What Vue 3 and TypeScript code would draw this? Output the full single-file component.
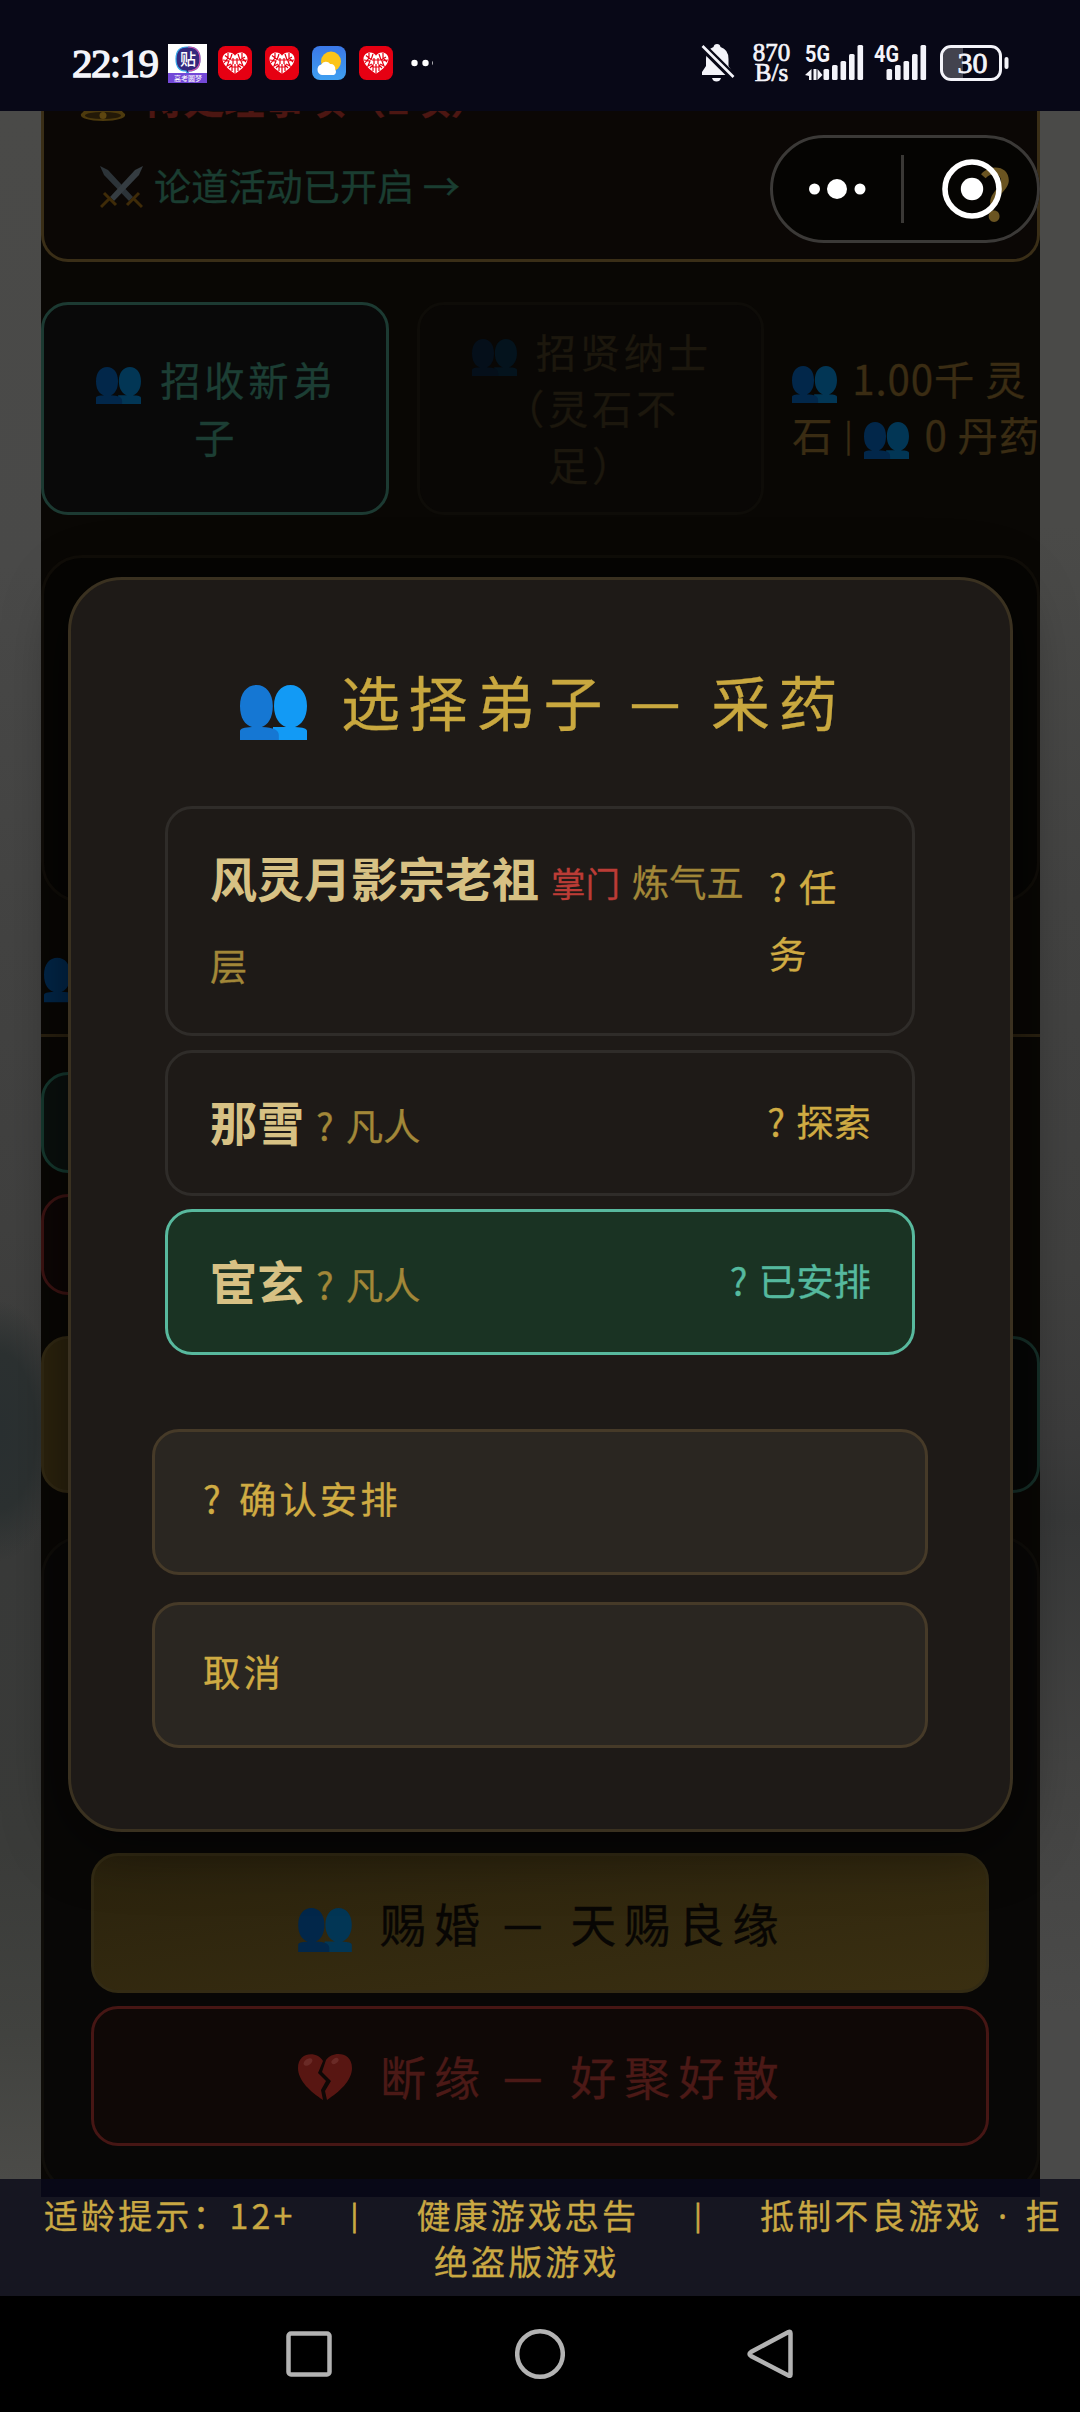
<script setup lang="ts">
interface Disciple {
  name: string
  master?: boolean
  level: string
  status: string
  picked?: boolean
}

const disciples: Disciple[] = [
  { name: '风灵月影宗老祖', master: true, level: '炼气五层', status: '任务' },
  { name: '那雪', level: '凡人', status: '探索' },
  { name: '宦玄', level: '凡人', status: '已安排', picked: true },
]

// Bar tops, measured from the top of the signal icon
const bars = [24, 20, 16, 9, 0]
</script>

<template>
  <div class="screen">
    <svg class="defs" width="0" height="0" aria-hidden="true">
      <symbol id="people" viewBox="0 0 67 55">
        <path class="back" d="M50.500 0C60 0 67 8 67 21c0 12-6 19-12 21 8 .5 12 1.500 12 4v9H33V42l13 0C40 40 34 33 34 21 34 8 41 0 50.500 0z" />
        <path class="front" d="M16.500 0C26 0 32.800 8 32.800 21c0 12-5 19-11 21 12 .5 17 3 17 8v5H0V46c0-2.500 4-3.500 12-4C5 40 0 33 0 21 0 8 7 0 16.500 0z" />
      </symbol>
      <symbol id="heart-mark" viewBox="0 0 34 34">
        <rect width="34" height="34" rx="7.500" fill="#e60012" />
        <path fill="#fff" d="M17 28C10 23 4.500 18.500 4.500 12.800 4.500 9 7.500 6.500 11 6.500c3 0 5 1.500 6 3.200 1-1.700 3-3.200 6-3.200 3.500 0 6.500 2.500 6.500 6.300C29.500 18.500 24 23 17 28z" />
        <path fill="none" stroke="#e60012" stroke-width="1.200" d="M7 9.500l5 4M10 7v5l-4 5M14 8l-2 6M20 8l2 6 5-3M24 7v5l4 4M13 14h8M15 12v6M19 12v6M5 14l6 1-2 5 4-2M29 14l-6 1 2 5-4-2M11 22l3-3v6M23 22l-3-3v6M17 18v10M14 21h6" />
      </symbol>
    </svg>

    <header class="status">
      <span class="clock">22:19</span>
      <svg class="app tieba" width="39" height="39" viewBox="0 0 39 39">
        <rect width="39" height="39" fill="#fff" />
        <path d="M19 3h2q11 0 11 12t-11 12l-1.500 3-1.500-3Q8 27 8 15T19 3z" fill="#35297e" stroke="#36a7e8" stroke-width="1.200" />
        <path d="M20 3q12 0 12 12T20 27" fill="none" stroke="#d548a4" stroke-width="1.200" />
        <text x="12" y="21" font-size="16" fill="#fff" font-weight="500" class="cjk">贴</text>
        <rect y="29" width="39" height="10" fill="#7348d8" />
        <text x="6" y="37" font-size="7" fill="#fff" class="cjk">高考圆梦</text>
      </svg>
      <svg class="app" width="34" height="34"><use href="#heart-mark" /></svg>
      <svg class="app" width="34" height="34"><use href="#heart-mark" /></svg>
      <svg class="app" width="34" height="34" viewBox="0 0 34 34">
        <defs>
          <linearGradient id="sky" x1="0" y1="0" x2="0" y2="1">
            <stop offset="0" stop-color="#3b78e8" /><stop offset="1" stop-color="#3f9ff0" />
          </linearGradient>
        </defs>
        <rect width="34" height="34" rx="8" fill="url(#sky)" />
        <circle cx="19" cy="15.500" r="10" fill="#fcc419" />
        <path d="M10 29a5.500 5.500 0 0 1-.8-10.600 5.500 5.500 0 0 1 9-.4 4.500 4.500 0 0 1 5 5.500 3.500 3.500 0 0 1-1.500 5.500z" fill="#fff" />
      </svg>
      <svg class="app" width="34" height="34"><use href="#heart-mark" /></svg>
      <svg class="more" width="22" height="8" viewBox="0 0 22 8">
        <circle cx="3.500" cy="4" r="3.200" fill="#fff" /><circle cx="14.500" cy="4" r="3.200" fill="#fff" /><circle cx="24.500" cy="4" r="3.200" fill="#fff" />
      </svg>
      <span class="spacer"></span>
      <svg class="mute" width="34" height="40" viewBox="0 0 34 40">
        <path fill="#f4f4fa" d="M16 1q3 0 3.500 3 8 2.500 8 12v7l4 6v3H1v-3l4-6v-7Q5 6.500 12.500 4 13 1 16 1zM11 35h9q-1 3.500-4.500 3.500T11 35z" />
        <path d="M1 3l31 31" stroke="#080817" stroke-width="8" />
        <path d="M1.500 3l31 31" stroke="#f4f4fa" stroke-width="2.600" />
      </svg>
      <span class="speed"><b>870</b><b>B/s</b></span>
      <svg class="signal" width="60" height="36" viewBox="0 0 60 36">
        <text x="0" y="17" textLength="25" lengthAdjust="spacingAndGlyphs" font-size="24" class="net">5G</text>
        <path fill="#f4f4fa" d="M6.500 24v11H4v-4L0 30zM8.500 24h3v11h-3zM12.500 24l5 6-5 5z" />
        <rect v-for="(t, i) in bars" :key="i" :x="18.500 + i * 8.500" :y="t" width="5.600" :height="35 - t" rx="1.500" fill="#f4f4fa" />
      </svg>
      <svg class="signal second" width="54" height="36" viewBox="0 0 54 36">
        <text x="0" y="17" textLength="25" lengthAdjust="spacingAndGlyphs" font-size="24" class="net">4G</text>
        <rect v-for="(t, i) in bars" :key="i" :x="12.500 + i * 8.500" :y="t" width="5.600" :height="35 - t" rx="1.500" fill="#f4f4fa" />
      </svg>
      <svg class="battery" width="69" height="36" viewBox="0 0 69 36">
        <path d="M12 3h11v30H12Q3 33 3 24V12Q3 3 12 3z" fill="#43434e" />
        <rect x="1.500" y="1.500" width="59" height="33" rx="9.500" fill="none" stroke="#f4f4fa" stroke-width="3" />
        <rect x="64.500" y="12" width="4" height="12" rx="2" fill="#f4f4fa" />
        <text x="17.500" y="28" font-size="30" textLength="30" class="pct">30</text>
      </svg>
    </header>

    <main class="stage">
      <div class="page">
        <section class="todo">
          <h2>
            <svg width="46" height="46" viewBox="0 0 46 46">
              <path fill="#4d3a0d" d="M23 2q3 0 3 4 11 3 12 18 .5 8 7 13 2 6-22 7Q-1 43 1 37q6-5 7-13Q9 9 20 6q0-4 3-4z" />
              <ellipse cx="23" cy="38.500" rx="18" ry="3.500" fill="#231907" /><circle cx="23" cy="38.500" r="3.500" fill="#5d4610" />
            </svg>
            <span>待处理事项（1项）</span>
          </h2>
          <p>
            <svg width="43" height="43" viewBox="0 0 43 43">
              <path fill="#2c3338" d="M0 0l8 4 25 27-4 4L4 9z" /><path fill="#353c41" d="M43 0l-8 4-25 27 4 4L39 9z" />
              <path fill="none" stroke="#3f2b08" stroke-width="3" d="M4 27l12 12M39 27L27 39M9 33l-8 8M34 33l8 8" />
            </svg>
            <span>论道活动已开启 →</span>
          </p>
        </section>

        <section class="recruit">
          <div class="btn open"><span><svg class="ppl"><use href="#people" /></svg> 招收新弟<br>子</span></div>
          <div class="btn closed"><span><svg class="ppl"><use href="#people" /></svg> 招贤纳士<br>（灵石不<br>足）</span></div>
          <div class="cost"><svg class="ppl"><use href="#people" /></svg> 1.00千 灵<br>石<i>|</i><svg class="ppl"><use href="#people" /></svg> 0 丹药</div>
        </section>

        <section class="panel"></section>
        <div class="section-head"><svg width="54" height="46" preserveAspectRatio="none"><use href="#people" /></svg></div>
        <div class="bar green"></div>
        <div class="bar red"></div>
        <div class="pair"><div class="gold"></div><div class="teal"></div></div>

        <section class="bonds">
          <div class="bond marry">
            <svg width="54" height="44"><use href="#people" /></svg><span>赐婚</span><i>—</i><span>天赐良缘</span>
          </div>
          <div class="bond part">
            <svg width="54" height="48" viewBox="0 0 54 48">
              <path fill="#581612" d="M25 8C20-2 0-2 0 15 0 28 13 39 25 47l-2-10 5-9-8-8z" />
              <path fill="#581612" d="M28 7C34-2 54-2 54 15 54 28 41 39 29 47l-2-9 6-10-9-9z" />
              <ellipse cx="10" cy="9" rx="5" ry="3" fill="#6a2a26" transform="rotate(-35 10 9)" /><ellipse cx="37" cy="8" rx="4" ry="2.500" fill="#6a2a26" transform="rotate(-35 37 8)" />
            </svg><span>断缘</span><i>—</i><span>好聚好散</span>
          </div>
        </section>
      </div>

      <div class="modal">
        <h1><svg width="67" height="55"><use href="#people" /></svg><span>选择弟子</span><i>—</i><span>采药</span></h1>
        <ul>
          <li v-for="d in disciples" :key="d.name" :class="{ picked: d.picked }">
            <div class="who">
              <strong>{{ d.name }}</strong><em v-if="d.master">掌门</em><small><template v-if="!d.master"><q>?</q></template>{{ d.level }}</small>
            </div>
            <div class="state" :class="{ narrow: d.master }"><q>?</q>{{ d.status }}</div>
          </li>
        </ul>
        <div class="actions">
          <button type="button"><q>?</q>确认安排</button>
          <button type="button">取消</button>
        </div>
      </div>

      <div class="help">?</div>
      <div class="capsule">
        <svg width="264" height="102" viewBox="0 0 264 102">
          <g fill="#fff"><circle cx="41.500" cy="51" r="5.500" /><circle cx="64" cy="51" r="10" /><circle cx="87" cy="51" r="5.500" /><circle cx="199" cy="51" r="11.200" /></g>
          <rect x="128" y="17" width="3" height="68" fill="#3a3835" />
          <circle cx="199" cy="51" r="27" fill="none" stroke="#fff" stroke-width="5.600" />
        </svg>
      </div>
    </main>

    <footer>
      <div>适龄提示：12+<i><s>|</s></i>健康游戏忠告<i><s>|</s></i>抵制不良游戏<u>·</u>拒</div>
      <div>绝盗版游戏</div>
    </footer>

    <nav>
      <svg width="50" height="52" viewBox="0 0 50 52"><rect x="4.500" y="5.500" width="41" height="41" rx="2.500" /></svg>
      <svg width="50" height="52" viewBox="0 0 50 52"><circle cx="25" cy="26" r="22.800" /></svg>
      <svg width="50" height="52" viewBox="0 0 50 52"><path d="M44.500 5.500v41q0 2-2 1L5 28q-3-2 0-4L42.500 4q2-1 2 1.500z" /></svg>
    </nav>
  </div>
</template>

<style>
body { margin: 0; background: #000; }
</style>

<style scoped>
* { box-sizing: border-box; margin: 0; padding: 0; }
.screen {
  --front: #02274a; --back: #023655;
  width: 1080px; height: 2412px; display: flex; flex-direction: column; overflow: hidden;
  font-family: "Noto Sans CJK SC", sans-serif;
}
.defs { position: absolute; }
.front { fill: var(--front); }
.back { fill: var(--back); }
i, em, u, s { font-style: normal; text-decoration: none; }
q { quotes: none; display: inline-block; }
q::before, q::after { content: none; }
.cjk { font-family: "Noto Sans CJK SC", sans-serif; }

.status { height: 111px; flex: none; background: #080817; display: flex; align-items: center; padding: 15px 71px 0 72px; }
.clock { font: 41px/1 "Liberation Serif", serif; letter-spacing: -1.600px; width: 96px; color: #f4f4fa; -webkit-text-stroke: 1.300px #f4f4fa; }
.app { margin-right: 13px; flex: none; }
.tieba { margin-right: 11px; }
.more { margin-left: 5px; }
.spacer { flex: 1; }
.mute { margin-right: 16px; }
.speed { width: 41px; display: flex; flex-direction: column; align-items: center; margin-right: 13px; }
.speed b { font: 400 25px/20px "Liberation Serif", serif; color: #f4f4fa; -webkit-text-stroke: .7px #f4f4fa; }
.net { font-family: Roboto, sans-serif; font-weight: 700; fill: #f4f4fa; }
.pct { font-family: "Liberation Serif", serif; fill: #f4f4fa; stroke: #f4f4fa; stroke-width: .8px; }
.signal { margin-right: 9px; overflow: visible; }
.second { margin-right: 12px; }

.stage {
  height: 2068px; flex: none; position: relative;
  background:
    radial-gradient(ellipse 60px 130px at 0 1320px, #2a3031 0, #2c3131 60%, transparent 100%) left / 41px 100% no-repeat,
    linear-gradient(#4a4a48 0, #494948 22%, #434342 40%, #40403f 54%, #393a39 70%, #3a3b39 84%, #41423f 93%, #4b4b48 100%) left / 41px 100% no-repeat,
    linear-gradient(#4a4a48 0, #4a4a48 20%, #434342 38%, #40403f 56%, #3c3c3c 64%, #373838 68%, #434342 80%, #4a4a49 92%, #4a4a49 100%) right / 40px 100% no-repeat;
}
.page { margin: 0 40px 0 41px; height: 2068px; overflow: hidden; background: #090704; display: flex; flex-direction: column; -webkit-text-stroke: .3px; }
.page > * { flex: none; }

.todo { height: 151px; border: 3px solid #3a2e17; border-top: 0; border-radius: 0 0 27px 27px; background: #0b0705; padding-left: 36px; overflow: hidden; }
.todo h2 { height: 12px; display: flex; align-items: flex-end; gap: 17px; font-size: 40.500px; line-height: 50px; color: #4c1612; }
.todo h2 span { position: relative; top: -1px; }
.todo p { margin-top: 35px; padding-left: 20px; display: flex; align-items: center; gap: 11px; height: 54px; font-size: 37.200px; color: #1a3d31; }
.todo p svg { position: relative; top: 2px; }

.recruit { margin-top: 40px; height: 213px; display: flex; gap: 28px; font-size: 40.300px; line-height: 56.400px; }
.btn { width: 348px; border: 3px solid #1c3a32; border-radius: 27px; display: flex; align-items: center; justify-content: center; text-align: center; letter-spacing: 3.700px; background: #090909; color: #1c3e34; padding: 0 0 2px 3px; }
.closed { border-color: #0e0c08; background: #090705; color: #1c170d; --front: #050f1a; --back: #04131d; }
.ppl { width: 45px; height: 37px; vertical-align: -8px; margin-right: 6px; }
.cost { flex: 1; color: #3a2c13; padding-top: 48px; white-space: nowrap; letter-spacing: .9px; }
.cost .ppl { margin-right: 5px; }
.cost i { display: inline-block; width: 31px; text-align: center; font-size: 31px; line-height: 1; position: relative; top: -4px; }

.panel { margin-top: 40px; height: 348px; border: 3px solid #100d08; border-radius: 41px; background: #060503; }
.section-head { height: 134px; margin-bottom: 35px; border-bottom: 3px solid #2a2110; padding: 54px 0 0 3px; }
.bar { width: 560px; height: 101px; border: 3px solid #163a30; border-radius: 27px; background: #0a100e; }
.bar.red { margin-top: 21px; border-color: #3e1413; background: #0d0605; }
.pair { margin-top: 41px; height: 157px; display: flex; gap: 20px; }
.pair div { flex: 1; border-radius: 27px; }
.gold { background: #2d240e; border: 3px solid #332a14; }
.teal { background: #060706; border: 3px solid #163029; }

.bonds { margin-top: 43px; height: 658px; border: 3px solid #0f0d09; border-radius: 41px; background: #080706; padding: 314px 48px 0 47px; display: flex; flex-direction: column; gap: 13px; }
.bond { height: 140px; flex: none; border-radius: 27px; border: 3px solid; display: flex; align-items: center; padding: 0 0 2px 204px; font-size: 46px; letter-spacing: 8.100px; white-space: nowrap; }
.bond svg { margin-right: 28px; position: relative; top: 2px; }
.bond i { font-family: "Noto Sans", sans-serif; font-size: 39px; width: 46px; margin: 0 21px 0 15px; letter-spacing: 0; }
.marry { border-color: #332b14; background: linear-gradient(172deg, #2a220d, #3a2f11); color: #080604; }
.marry svg { top: 8px; }
.part { border-color: #461614; background: #0f0806; color: #4b1916; }

.modal { --front: #1577d3; --back: #129af5; position: absolute; left: 68px; top: 466px; width: 945px; height: 1255px; border: 3px solid #3a3120; border-radius: 54px; background: #1e1a17; box-shadow: 0 12px 60px rgba(0, 0, 0, .55); padding: 80px 82px 0 81px; -webkit-text-stroke: .3px; }
h1 { font-weight: 400; display: flex; align-items: center; height: 92px; padding: 0 0 12px 88px; font-size: 59px; letter-spacing: 8.500px; color: #c9a83f; white-space: nowrap; }
h1 svg { margin-right: 34px; position: relative; top: 12px; }
h1 i { font-family: "Noto Sans", sans-serif; font-size: 50px; width: 57px; margin: 0 24px 0 19px; letter-spacing: 0; }
ul { list-style: none; margin: 54px 13px 0; display: flex; flex-direction: column; gap: 13.500px; }
li { border: 3px solid #2f2c29; border-radius: 27px; padding: 26px 42px 30px; display: flex; align-items: center; justify-content: space-between; min-height: 146px; }
.picked { border-color: #58b99e; background: #1a3323; }
.who { width: 540px; line-height: 84px; font-size: 47px; color: #d7c184; }
.who strong { -webkit-text-stroke: 0; }
.who em { font-size: 34.500px; line-height: 1; color: #bb3c36; margin-left: 12px; }
.who small { font-size: 37.200px; line-height: 1; color: #a28738; margin-left: 12px; }
.state { font-size: 37.400px; line-height: 67.400px; color: #cfab43; white-space: nowrap; position: relative; top: 1px; left: 1px; }
.narrow { width: 102px; white-space: normal; }
q { width: 30px; }
.state q { width: 29px; }
.narrow q { width: 30px; }
.picked .state { color: #55b99e; }
.actions { margin-top: 74px; display: flex; flex-direction: column; gap: 27px; }
button { height: 146px; border: 3px solid #463a28; border-radius: 27px; background: #2a2621; color: #cfab43; font: 37.400px/1 "Noto Sans CJK SC", sans-serif; letter-spacing: 3px; text-align: left; padding: 0 48px 7px; -webkit-text-stroke: .3px; }
button q { width: 36px; }

.capsule { position: absolute; left: 770px; top: 24px; width: 270px; height: 108px; border: 3px solid #3b3937; border-radius: 54px; }
.help { position: absolute; left: 770px; top: 24px; width: 270px; height: 108px; border-radius: 54px; background: #050402; color: #6a5421; font: 500 70px/112px "Noto Sans CJK SC", sans-serif; padding-left: 208px; }

footer { height: 117px; flex: none; padding-top: 13px; background: linear-gradient(#080817, #080817) 41px 0 / 999px 18px no-repeat #161621; color: #c9a843; font-size: 34px; letter-spacing: 3.100px; line-height: 46px; white-space: nowrap; -webkit-text-stroke: .3px; }
footer div { padding-left: 44px; }
footer div + div { padding-left: 434px; }
footer i { display: inline-block; width: 121px; text-align: center; }
footer s { font-size: 27px; line-height: 1; position: relative; top: -3px; -webkit-text-stroke: .8px; }
footer u { display: inline-block; width: 43px; text-align: center; font-family: "Noto Sans", sans-serif; line-height: 1; }

nav { height: 116px; background: #000; display: flex; justify-content: center; align-items: center; gap: 181px; }
nav svg { fill: none; stroke: #b3b3b3; stroke-width: 4.500; }
</style>
